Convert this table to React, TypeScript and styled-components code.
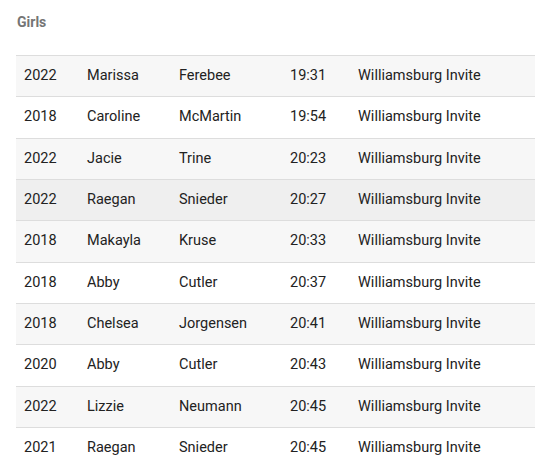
import styled, { createGlobalStyle, css } from "styled-components";

const RESULTS = [
  { year: "2022", first: "Marissa", last: "Ferebee", time: "19:31", meet: "Williamsburg Invite" },
  { year: "2018", first: "Caroline", last: "McMartin", time: "19:54", meet: "Williamsburg Invite" },
  { year: "2022", first: "Jacie", last: "Trine", time: "20:23", meet: "Williamsburg Invite" },
  { year: "2022", first: "Raegan", last: "Snieder", time: "20:27", meet: "Williamsburg Invite", hover: true },
  { year: "2018", first: "Makayla", last: "Kruse", time: "20:33", meet: "Williamsburg Invite" },
  { year: "2018", first: "Abby", last: "Cutler", time: "20:37", meet: "Williamsburg Invite" },
  { year: "2018", first: "Chelsea", last: "Jorgensen", time: "20:41", meet: "Williamsburg Invite" },
  { year: "2020", first: "Abby", last: "Cutler", time: "20:43", meet: "Williamsburg Invite" },
  { year: "2022", first: "Lizzie", last: "Neumann", time: "20:45", meet: "Williamsburg Invite" },
  { year: "2021", first: "Raegan", last: "Snieder", time: "20:45", meet: "Williamsburg Invite" },
];

const App = () => {
  return (
    <>
      <GlobalStyle />
      <Page>
        <Heading>Girls</Heading>
        <Table>
          <colgroup>
            <col style={{ width: 63 }} />
            <col style={{ width: 92 }} />
            <col style={{ width: 111 }} />
            <col style={{ width: 68 }} />
            <col />
          </colgroup>
          <tbody>
            {RESULTS.map((row, i) => (
              <Row key={i} striped={i % 2 === 0} hovered={row.hover}>
                <Cell>{row.year}</Cell>
                <Cell>{row.first}</Cell>
                <Cell>{row.last}</Cell>
                <Cell>{row.time}</Cell>
                <Cell>{row.meet}</Cell>
              </Row>
            ))}
          </tbody>
        </Table>
      </Page>
    </>
  );
};

export default App;

const GlobalStyle = createGlobalStyle`
  body {
    margin: 0;
    background: #ffffff;
    font-family: Roboto, "Liberation Sans", sans-serif;
  }
`;

const Page = styled.div`
  padding: 14px 12px 0 16px;
`;

const Heading = styled.div`
  padding-left: 1px;
  font-size: 14px;
  font-weight: 700;
  line-height: 16px;
  color: #757575;
  margin-bottom: 25px;
`;

const Table = styled.table`
  width: 519px;
  border-collapse: collapse;
  table-layout: fixed;
`;

const Row = styled.tr<{ striped?: boolean; hovered?: boolean }>`
  border-top: 1px solid #dddddd;

  ${(props) =>
    props.striped &&
    css`
      background-color: #f7f7f7;
    `}

  ${(props) =>
    props.hovered &&
    css`
      background-color: #efefef;
    `}
`;

const Cell = styled.td`
  padding: 12px 8px;
  font-size: 14.5px;
  line-height: 16.33px;
  color: #222222;
  white-space: nowrap;
`;
